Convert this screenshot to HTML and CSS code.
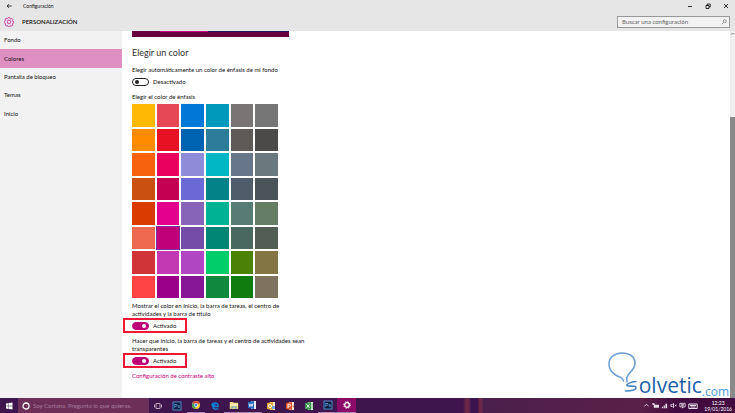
FILE: index.html
```
<!DOCTYPE html>
<html lang="es">
<head>
    <meta charset="UTF-8">
    <meta name="viewport" content="width=device-width, initial-scale=1.0">
    <title>Configuración</title>
    <link rel="stylesheet" href="styles.css">
</head>
<body>

    <header class="header">
        <div class="titlebar">
            <button class="back" aria-label="Atrás"><svg viewBox="0 0 8 8"><path d="M7.500 4H1.500M4 1.500L1.500 4L4 6.500"/></svg></button>
            <span class="app-name">Configuración</span>
            <div class="window-buttons">
                <button aria-label="Minimizar"><svg viewBox="0 0 6 6"><path d="M1 3.500h4"/></svg></button>
                <button aria-label="Restaurar"><svg viewBox="0 0 6 6"><path d="M1 2.500h3v3h-3zM2.200 2.500V1h3v3H4"/></svg></button>
                <button aria-label="Cerrar"><svg viewBox="0 0 6 6"><path d="M1 1l4 4M5 1L1 5"/></svg></button>
            </div>
        </div>
        <div class="heading">
            <svg class="gear" viewBox="0 0 20 20"><path d="M8.500 1h3l.6 2.500 1.500.7 2.300-1.400 2 2-1.400 2.300.7 1.500 2.300.5v3l-2.300.5-.7 1.500 1.400 2.300-2 2-2.300-1.400-1.500.7-.6 2.300h-3l-.6-2.300-1.500-.7-2.300 1.400-2-2 1.400-2.300-.7-1.500L.5 11.500v-3L2.800 8l.7-1.500-1.400-2.300 2-2 2.300 1.400 1.500-.6z"/><circle cx="10" cy="10" r="3.500"/></svg>
            <h1>PERSONALIZACIÓN</h1>
            <div class="search">
                <input type="text" placeholder="Buscar una configuración" aria-label="Buscar una configuración">
                <svg viewBox="0 0 8 8"><circle cx="5" cy="3" r="2"/><path d="M3.500 4.500L1 7"/></svg>
            </div>
        </div>
    </header>

    <div class="content">
        <nav class="sidebar">
            <ul>
                <li><a href="#fondo">Fondo</a></li>
                <li><a href="#colores" class="active">Colores</a></li>
                <li><a href="#bloqueo">Pantalla de bloqueo</a></li>
                <li><a href="#temas">Temas</a></li>
                <li><a href="#inicio">Inicio</a></li>
            </ul>
        </nav>

        <main class="main">
            <div class="preview"></div>
            <h2>Elegir un color</h2>

            <p id="auto-text">Elegir automáticamente un color de énfasis de mi fondo</p>
            <label class="switch"><input type="checkbox" aria-describedby="auto-text"><span>Desactivado</span></label>

            <p class="palette-title">Elegir el color de énfasis</p>
            <div class="palette" id="palette"></div>

            <p id="show-text" class="narrow">Mostrar el color en Inicio, la barra de tareas, el centro de actividades y la barra de título</p>
            <label class="switch marked"><input type="checkbox" aria-describedby="show-text" checked><span>Activado</span></label>

            <p id="trans-text" class="wide">Hacer que Inicio, la barra de tareas y el centro de actividades sean transparentes</p>
            <label class="switch marked"><input type="checkbox" aria-describedby="trans-text" checked><span>Activado</span></label>

            <a class="contrast" href="#contraste">Configuración de contraste alto</a>
        </main>

        <div class="scrollbar">
            <svg viewBox="0 0 5 5"><path d="M1 3.500L2.500 2L4 3.500"/></svg>
            <div class="thumb"></div>
        </div>

        <div class="logo">
            <svg viewBox="0 0 34 46">
                <path class="bulb" d="M15.500 29C15 25 11 25 7.500 23C3 20 1 16 1 12C1 5 7 1 14 1C22 1 27 5 27 11C27 19 20 20 19 25C18.500 27 19 28 19 30"/>
                <path class="base" d="M28 29.500C23 30 18 32 19 33.500C20 35 28 33 28 35.500C28 38 23 39 17.500 39"/>
            </svg>
            <span class="logo-name">olvetic</span><span class="logo-com">.com</span>
        </div>
    </div>

    <footer class="taskbar">
        <button class="start" aria-label="Inicio"><svg viewBox="0 0 8 8"><path d="M1 1.500L3.600 1.100V3.800H1zM4 1L7.500.5V3.800H4zM1 4.200H3.600V6.900L1 6.500zM4 4.200H7.500V7.500L4 7z"/></svg></button>
        <div class="cortana">
            <svg viewBox="0 0 8 8"><circle cx="4" cy="4" r="3"/></svg>
            <input type="text" placeholder="Soy Cortana. Pregunta lo que quieras." aria-label="Soy Cortana">
        </div>
        <div class="apps">
            <button aria-label="Vista de tareas"><svg viewBox="0 0 10 10"><path d="M3 2.500h4v5H3zM1.500 3.500v3M8.500 3.500v3" fill="none" stroke="#c9b6cc" stroke-width=".9"/></svg></button>
            <button aria-label="Photoshop"><svg viewBox="0 0 10 10"><rect x="1" y="1" width="8" height="8" fill="#0b1b3c" stroke="#5aa7e8" stroke-width=".8"/><text x="5" y="6.700" font-size="5" text-anchor="middle" fill="#7cc0f8">Ps</text></svg></button>
            <button class="open" aria-label="Chrome"><svg viewBox="0 0 10 10"><circle cx="5" cy="5" r="4" fill="#f9cf30"/><path d="M5 5L1.500 3A4 4 0 0 1 8.700 3.500z" fill="#e24234"/><path d="M5 5L1.500 3A4 4 0 0 0 4.500 9z" fill="#3aa757"/><circle cx="5" cy="5" r="1.900" fill="#fff"/><circle cx="5" cy="5" r="1.400" fill="#3f83e8"/></svg></button>
            <button aria-label="Edge"><svg viewBox="0 0 10 10"><path d="M8 7.500C6.500 8.600 3 8.700 2.900 5.500H8C8.300 3 6.800 1.900 5 1.900C3 1.900 2 3.200 1.700 4.500M2.900 5.500C3 4.200 4 3.500 5.500 3.700" fill="none" stroke="#0c82da" stroke-width="1.500"/></svg></button>
            <button class="open" aria-label="Explorador"><svg viewBox="0 0 10 10"><path d="M.8 2H4l.7.8h4.500V9H.8z" fill="#f5d87c"/><path d="M1 4h8v1.500H1z" fill="#fff3c4"/><path d="M2.500 9V6.500h5V9H6.500V7.500h-3V9z" fill="#46a6df"/></svg></button>
            <button class="open" aria-label="Word"><svg viewBox="0 0 10 10"><path d="M4 1h5v8H4z" fill="#e6effb"/><path d="M1 2l6-1v8L1 8z" fill="#2468bd"/><path d="M2 3.500l.8 3L4 3.800l1 2.700.9-3" fill="none" stroke="#fff" stroke-width=".8"/></svg></button>
            <button aria-label="Outlook"><svg viewBox="0 0 10 10"><path d="M4 1h5v8H4z" fill="#fff1cd"/><path d="M1 2l6-1v8L1 8z" fill="#e9a52c"/><circle cx="4" cy="5" r="1.500" fill="none" stroke="#fff"/><path d="M6 5h3v3H6z" fill="#6aa9df"/></svg></button>
            <button aria-label="PowerPoint"><svg viewBox="0 0 10 10"><path d="M4 1h5v8H4z" fill="#fde7dc"/><path d="M1 2l6-1v8L1 8z" fill="#e2552c"/><path d="M3 7V3.300h1.500a1 1 0 0 1 0 2H3" fill="none" stroke="#fff" stroke-width=".9"/><path d="M7 5l2-1v3z" fill="#e98d5c"/></svg></button>
            <button aria-label="Excel"><svg viewBox="0 0 10 10"><path d="M4 1h5v8H4z" fill="#e2f3df"/><path d="M1 2l6-1v8L1 8z" fill="#36934e"/><path d="M2.500 3.300l3 3.500M5.500 3.300l-3 3.500" stroke="#fff" stroke-width=".9"/><path d="M7 3h2M7 5h2M7 7h2" stroke="#4aa35c" stroke-width=".6"/></svg></button>
            <button class="open" aria-label="Photoshop"><svg viewBox="0 0 10 10"><rect x="1" y="1" width="8" height="8" fill="#0b1b3c" stroke="#5aa7e8" stroke-width=".8"/><text x="5" y="6.700" font-size="5" text-anchor="middle" fill="#7cc0f8">Ps</text></svg></button>
            <button class="open current" aria-label="Configuración"><svg viewBox="0 0 10 10"><circle cx="5" cy="5" r="2.300" fill="none" stroke="#fff" stroke-width="1.300"/><circle cx="5" cy="5" r="3.300" fill="none" stroke="#fff" stroke-width="1" stroke-dasharray="1.300"/></svg></button>
        </div>
        <div class="tray">
            <svg viewBox="0 0 8 8"><path d="M1.500 5L4 2.500L6.500 5"/></svg>
            <svg viewBox="0 0 8 8"><path class="solid" d="M2 3h6v3.500H2zM0 1.500h3v2H1z"/></svg>
            <svg viewBox="0 0 8 8"><path class="solid" d="M5 2h2v5H5zM3 4h1.400v3H3zM1 5.500h1.300V7H1z"/></svg>
            <svg viewBox="0 0 8 8"><path d="M1 3h1.500L4 1.500v5L2.500 5H1zM5.500 3l2 2M7.500 3l-2 2"/></svg>
            <svg viewBox="0 0 8 8"><path d="M1 1.500h6v4H5L4 7V5.500H1zM2.500 3h3M2.500 4.200h3"/></svg>
            <svg class="keyboard" viewBox="0 0 10 8"><path d="M.8 2h8.400v4.500H.8zM2 3.500h6M2.500 5h5"/></svg>
            <time class="clock"><span>12:23</span><span>19/01/2016</span></time>
        </div>
    </footer>

    <script>
        const colors = [
            "#ffb900", "#e74856", "#0078d7", "#0099bc", "#7a7574", "#767676",
            "#ff8c00", "#e81123", "#0063b1", "#2d7d9a", "#5d5a58", "#4c4a48",
            "#f7630c", "#ea005e", "#8e8cd8", "#00b7c3", "#68768a", "#69797e",
            "#ca5010", "#c30052", "#6b69d6", "#038387", "#515c6b", "#4a5459",
            "#da3b01", "#e3008c", "#8764b8", "#00b294", "#567c73", "#647c64",
            "#ef6950", "#bf0077", "#744da9", "#018574", "#486860", "#525e54",
            "#d13438", "#c239b3", "#b146c2", "#00cc6a", "#498205", "#847545",
            "#ff4343", "#9a0089", "#881798", "#10893e", "#107c10", "#7e735f"
        ];
        const palette = document.getElementById("palette");

        colors.forEach(function (color) {
            let swatch = document.createElement("input");
            swatch.type = "radio";
            swatch.name = "accent";
            swatch.setAttribute("aria-label", color);
            swatch.style.backgroundColor = color;
            swatch.checked = color === "#bf0077";
            palette.appendChild(swatch);
        });
    </script>

</body>
</html>
```
FILE: styles.css
```
* { box-sizing: border-box; }
body { margin: 0; min-height: 100vh; display: flex; flex-direction: column; font: 6px/8px Lato, sans-serif; color: #111; background: #fff; }
h1, h2, p, ul { margin: 0; padding: 0; font-weight: normal; }
button { padding: 0; border: none; background: none; display: flex; align-items: center; justify-content: center; }
input { font: inherit; margin: 0; }
svg { fill: none; stroke: currentColor; flex: none; }

.header { background: #e6e6e6; height: 31px; }
.titlebar { display: flex; align-items: center; height: 12px; font-size: 5px; }
.back { width: 18px; }
.back svg { width: 6px; height: 6px; }
.app-name { margin-left: 5px; }
.window-buttons { display: flex; margin-left: auto; }
.window-buttons button { width: 18px; height: 12px; }
.window-buttons svg { width: 6px; height: 6px; stroke-width: 0.8; }

.heading { display: flex; align-items: center; height: 19px; padding: 0 5px 0 4px; }
.gear { width: 10px; height: 10px; color: #d0289a; stroke-width: 1.6; }
.heading h1 { margin-left: 8px; font-size: 6px; font-weight: 600; }
.search { display: flex; align-items: center; width: 113px; height: 12px; margin-left: auto; padding: 0 2px 0 4px; border: 1px solid #999; background: #f2f2f2; }
.search input { flex: 1; min-width: 0; padding: 0; border: none; background: none; }
.search input::placeholder { color: #666; }
.search svg { width: 6px; height: 6px; color: #777; }

.content { position: relative; flex: 1; display: flex; }
.sidebar { width: 122px; background: #f2f2f2; }
.sidebar ul { display: grid; grid-auto-rows: 1fr; min-height: 92px; list-style: none; }
.sidebar a { display: flex; align-items: center; height: 100%; padding-left: 4px; color: inherit; text-decoration: none; }
.sidebar .active { background: #df8fc2; }

.main { flex: 1; padding-left: 10px; }
.preview { width: 157px; height: 6px; background: linear-gradient(90deg, #66003f 28px, #c4007a 28px 76px, #1c1758 76px) no-repeat top / 100% 1px, #66003f; }
.main h2 { margin: 10px 0 7px; font-size: 9px; line-height: 12px; color: #333; }
.switch { display: flex; align-items: center; gap: 4px; width: 64px; height: 15px; }
.switch input { appearance: none; display: flex; align-items: center; width: 17px; height: 8px; padding: 0 2px; border: 1px solid #222; border-radius: 4px; }
.switch input::before { content: ""; width: 4px; height: 4px; border-radius: 50%; background: #222; }
.switch input:checked { justify-content: flex-end; border-color: #bf0077; background: #bf0077; }
.switch input:checked::before { background: #fff; }
.marked { margin-left: -9px; padding-left: 7px; border: 2px solid #f01834; }

.palette-title { margin-top: 4px; }
.palette { display: grid; grid-template-columns: repeat(6, 1fr); grid-auto-rows: 1fr; gap: 2px; width: 146px; height: 194px; margin: 3px 0 4px; }
.palette input { appearance: none; width: 100%; height: 100%; }
.palette input:checked { outline: 1px solid #7a2da0; }
.narrow { width: 152px; }
.wide { width: 176px; margin-top: 4px; }
.contrast { display: block; margin-top: 4px; color: #bf0077; text-decoration: none; }

.scrollbar { display: flex; flex-direction: column; align-items: center; width: 5px; background: #f0f0f0; color: #777; }
.scrollbar svg { width: 5px; height: 5px; }
.thumb { flex: 1; width: 5px; margin-top: 81px; background: #8a8a8a; }

.logo { position: absolute; right: 6px; bottom: 0; display: flex; align-items: flex-end; }
.logo svg { width: 34px; height: 46px; stroke-linecap: round; }
.bulb { stroke: #6fa0d4; stroke-width: 1.6; }
.base { stroke: #4a86c6; stroke-width: 1.6; }
.logo-name { margin: 0 0 1px -3px; font: 21px/24px "Open Sans", sans-serif; color: #1c60a8; }
.logo-com { font: 12px/12px "Open Sans", sans-serif; color: #4a9bd6; }

.taskbar { display: flex; height: 15px; color: #e8dcea; background: linear-gradient(90deg, #3e154c 0 463px, #6b2748 466px 469px, #3d1350 471px 478px, #6b2748 479px 482px, #4b1f4c 483px, #5a2048 87%, #430c40 92%); }
.start { width: 18px; color: #fff; }
.start svg { width: 8px; height: 8px; fill: #fff; stroke: none; }
.cortana { display: flex; align-items: center; gap: 3px; width: 131px; padding-left: 4px; background: #6c3058; }
.cortana svg { width: 8px; height: 8px; color: #fff; stroke-width: 1.3; }
.cortana input { flex: 1; min-width: 0; padding: 0; border: none; background: none; color: #fff; }
.cortana input::placeholder { color: #a57c9c; }
.apps { display: grid; grid-template-columns: repeat(11, 1fr); width: 207px; }
.apps svg { width: 10px; height: 10px; stroke: none; }
.apps .open { border-bottom: 1px solid #a884ae; }
.apps .current { background: #8c0a68; }
.tray { display: flex; align-items: center; gap: 2px; margin-left: auto; padding-right: 3px; }
.tray svg { width: 7px; height: 7px; }
.tray .keyboard { width: 10px; height: 8px; }
.tray .solid { fill: currentColor; stroke: none; }
.clock { display: flex; flex-direction: column; align-items: center; margin-left: 4px; font-size: 5px; line-height: 6px; color: #fff; }
```
